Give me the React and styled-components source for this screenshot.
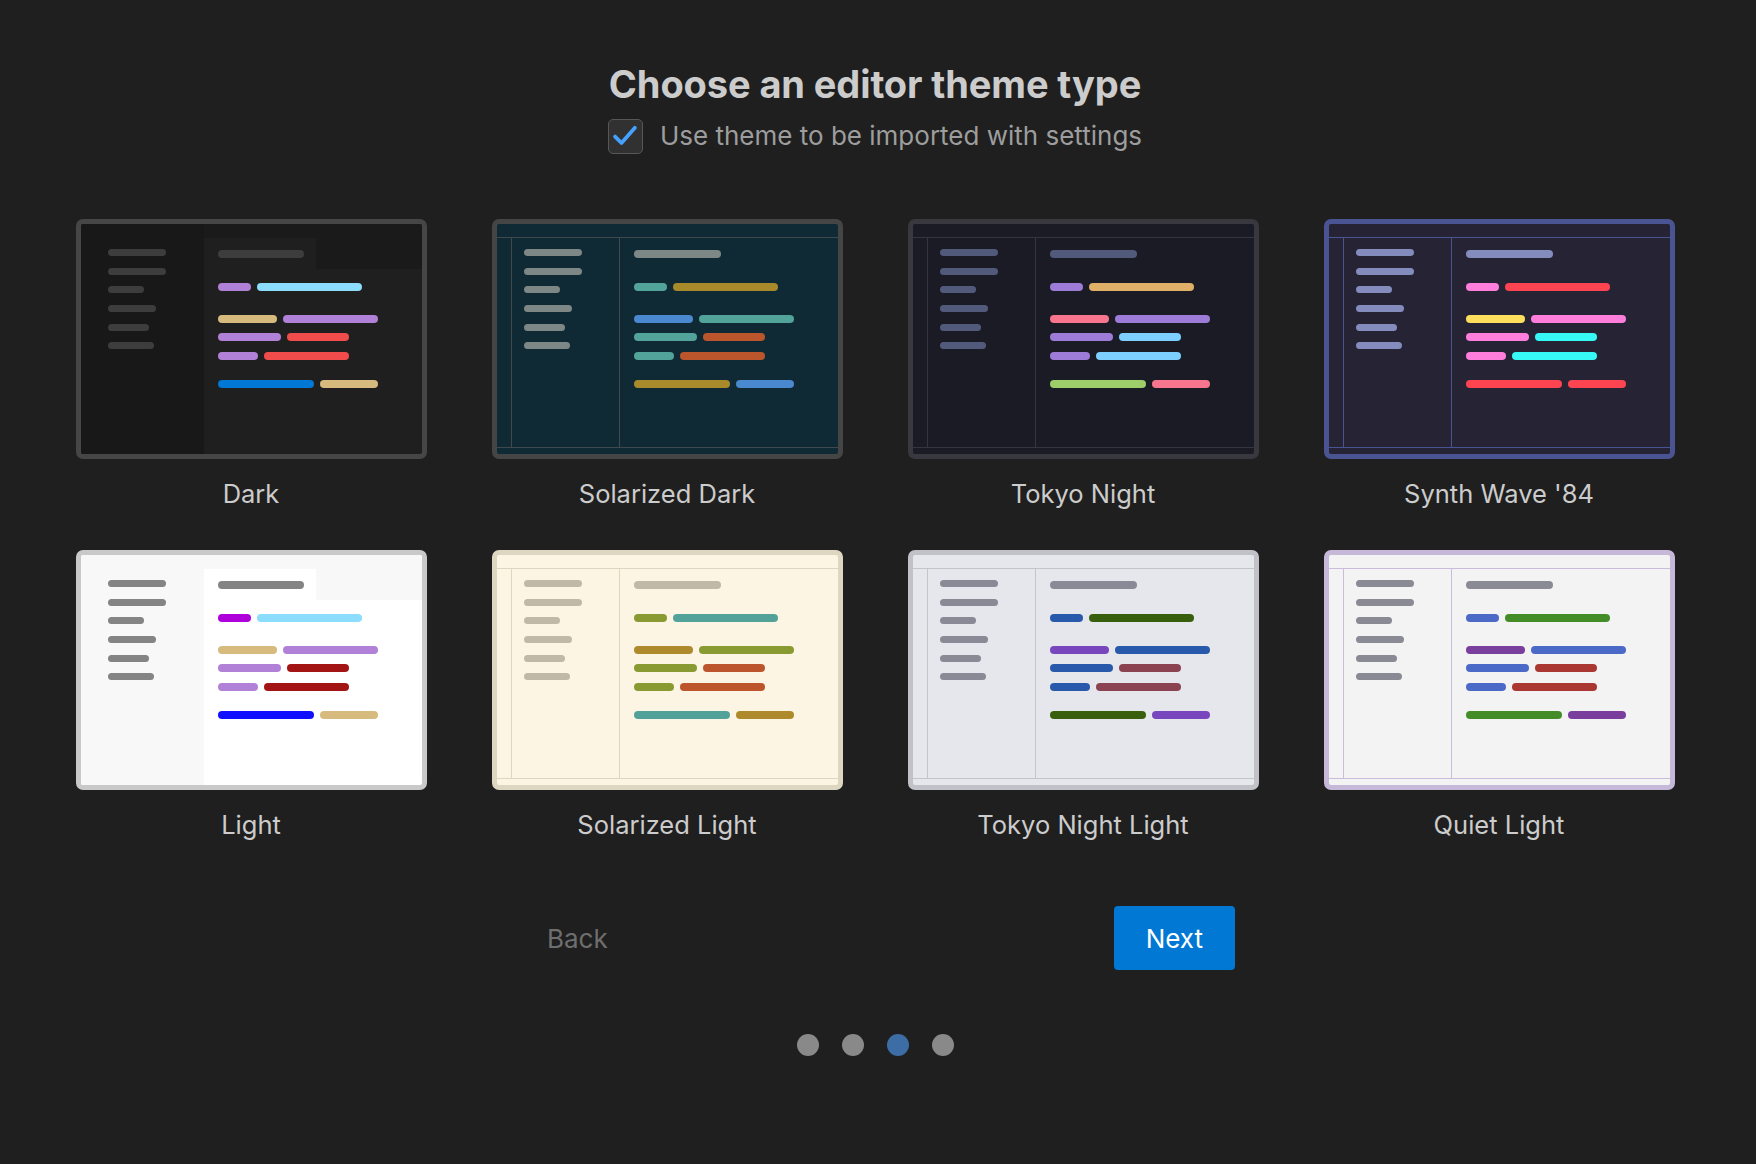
import React from 'react';
import styled, { createGlobalStyle } from 'styled-components';

const GlobalStyle = createGlobalStyle`
  html, body { margin: 0; padding: 0; background: #1f1f1f; }
  * { box-sizing: border-box; }
`;

// widths of the fake code / sidebar lines, same in every preview
const sideWidths = [58, 58, 36, 48, 41, 46];
const codeRows = [
  { gap: 0, w: [33, 105] },
  { gap: 24, w: [59, 95] },
  { gap: 10, w: [63, 62] },
  { gap: 11, w: [40, 85] },
  { gap: 20, w: [96, 58] },
];

const themes = [
  {
    name: 'Dark', tabs: true, border: '#464646', bg: '#1f1f1f', side: '#181818', bar: '#1a1a1a', muted: '#3d3d3d',
    code: [['#b180d7', '#8cdcfe'], ['#d7ba7d', '#b180d7'], ['#b180d7', '#f14c4c'], ['#b180d7', '#f14c4c'], ['#0078d4', '#d7ba7d']],
  },
  {
    name: 'Solarized Dark', border: '#454545', line: '#404a4e', bg: '#0f2a34', muted: '#7d8786',
    code: [['#52a39a', '#a98a2b'], ['#4a88cf', '#52a39a'], ['#52a39a', '#bb552c'], ['#52a39a', '#bb552c'], ['#a98a2b', '#4a88cf']],
  },
  {
    name: 'Tokyo Night', border: '#38383e', line: '#34353f', bg: '#1b1b26', muted: '#525a7c',
    code: [['#9d7cd8', '#e0af68'], ['#f7768e', '#9d7cd8'], ['#9d7cd8', '#7dcfff'], ['#9d7cd8', '#7dcfff'], ['#9ece6a', '#f7768e']],
  },
  {
    name: "Synth Wave '84", border: '#4b5493', line: '#495495', bg: '#262335', muted: '#848bbd',
    code: [['#ff7edb', '#fe4450'], ['#fede5d', '#ff7edb'], ['#ff7edb', '#36f9f6'], ['#ff7edb', '#36f9f6'], ['#fe4450', '#fe4450']],
  },
  {
    name: 'Light', tabs: true, border: '#c9c9c9', bg: '#ffffff', side: '#f8f8f8', bar: '#f8f8f8', muted: '#848484',
    code: [['#af00db', '#8cdcfe'], ['#d7ba7d', '#b180d7'], ['#b180d7', '#a31515'], ['#b180d7', '#a31515'], ['#1010ff', '#d7ba7d']],
  },
  {
    name: 'Solarized Light', border: '#ddd6c1', line: '#ddd6c1', bg: '#fcf5e3', muted: '#c1b9a8',
    code: [['#8a9a32', '#52a29a'], ['#ae8a2c', '#8a9a32'], ['#8a9a32', '#bc552c'], ['#8a9a32', '#bc552c'], ['#52a29a', '#ae8a2c']],
  },
  {
    name: 'Tokyo Night Light', border: '#c1c2c7', line: '#c4c5cb', bg: '#e6e7ed', muted: '#898a96',
    code: [['#2959aa', '#385f0d'], ['#7847bd', '#2959aa'], ['#2959aa', '#8c4351'], ['#2959aa', '#8c4351'], ['#385f0d', '#7847bd']],
  },
  {
    name: 'Quiet Light', border: '#c5b8d9', line: '#c9bcdc', bg: '#f3f3f3', muted: '#898a94',
    code: [['#4b69c6', '#448c27'], ['#7a3e9d', '#4b69c6'], ['#4b69c6', '#aa3731'], ['#4b69c6', '#aa3731'], ['#448c27', '#7a3e9d']],
  },
];

const Page = styled.div`
  min-height: 100vh;
  background: #1f1f1f;
  font-family: Inter, "Noto Sans", sans-serif;
  display: flex;
  flex-direction: column;
  align-items: center;
  padding: 61px 6px 0 0;
`;

const Title = styled.h1`
  margin: 0;
  font-size: 38px;
  line-height: 46px;
  font-weight: 700;
  letter-spacing: -0.1px;
  color: #cccccc;
`;

const ImportRow = styled.label`
  margin-top: 11px;
  display: flex;
  align-items: center;
  gap: 17px;
  color: #9d9d9d;
  font-size: 26px;
  line-height: 36px;
`;

const CheckBox = styled.span`
  width: 35px;
  height: 35px;
  border-radius: 5px;
  background: #313131;
  border: 1.5px solid #575757;
  display: flex;
  align-items: center;
  justify-content: center;
`;

const Grid = styled.div`
  margin-top: 65px;
  display: grid;
  grid-template-columns: repeat(4, 351px);
  column-gap: 65px;
  row-gap: 42px;
`;

const Tile = styled.div`
  display: flex;
  flex-direction: column;
  align-items: center;
`;

const Label = styled.div`
  margin-top: 21px;
  font-size: 25.5px;
  line-height: 28px;
  color: #cccccc;
`;

const Card = styled.div`
  width: 351px;
  height: 240px;
  border: 5px solid ${p => p.$border};
  border-radius: 7px;
  overflow: hidden;
  background: ${p => p.$bg};
  display: flex;
  flex-direction: ${p => (p.$row ? 'row' : 'column')};
`;

const TitleBar = styled.div`
  height: 14px;
  flex: none;
  border-bottom: 1px solid ${p => p.$line};
`;

const StatusBar = styled.div`
  height: 7px;
  flex: none;
  border-top: 1px solid ${p => p.$line};
`;

const Body = styled.div`
  flex: 1;
  display: flex;
  min-height: 0;
`;

const ActivityBar = styled.div`
  width: 15px;
  border-right: 1px solid ${p => p.$line};
`;

const SideBar = styled.div`
  width: ${p => (p.$tabs ? 123 : 108)}px;
  flex: none;
  padding: ${p => (p.$tabs ? '25px 0 0 27px' : '11px 0 0 12px')};
  background: ${p => p.$bg || 'transparent'};
  border-right: ${p => (p.$line ? `1px solid ${p.$line}` : 'none')};
  display: flex;
  flex-direction: column;
  gap: 11.7px;
`;

const Editor = styled.div`
  flex: 1;
  display: flex;
  flex-direction: column;
  padding: ${p => (p.$tabs ? '0' : '12px 0 0 14px')};
`;

const TabStrip = styled.div`
  height: 45px;
  flex: none;
  background: ${p => p.$bg};
  display: flex;
  align-items: flex-end;
`;

const Tab = styled.div`
  width: 112px;
  height: 31px;
  background: ${p => p.$bg};
  padding: 12px 0 0 14px;
`;

const Code = styled.div`
  padding: ${p => (p.$tabs ? '14px 0 0 14px' : '25px 0 0 0')};
  display: flex;
  flex-direction: column;
`;

const CodeRow = styled.div`
  display: flex;
  gap: 6px;
  margin-top: ${p => p.$gap}px;
`;

const Pill = styled.div`
  height: ${p => p.$h || 8}px;
  width: ${p => p.$w}px;
  border-radius: 4px;
  background: ${p => p.$c};
  flex: none;
`;

const Footer = styled.div`
  margin-top: 67px;
  width: 720px;
  display: flex;
  justify-content: space-between;
`;

const Button = styled.button`
  height: 64px;
  padding: 0 32px;
  border: none;
  border-radius: 4px;
  font-family: inherit;
  font-size: 26px;
  background: ${p => (p.$primary ? '#0078d4' : 'transparent')};
  color: ${p => (p.$primary ? '#ffffff' : '#6e6e6e')};
  cursor: pointer;
`;

const Dots = styled.div`
  margin-top: 64px;
  display: flex;
  gap: 23px;
`;

const Dot = styled.span`
  width: 22px;
  height: 22px;
  border-radius: 50%;
  background: ${p => (p.$active ? '#3c6ea5' : '#898989')};
`;

function SideLines({ color }) {
  return sideWidths.map((w, i) => <Pill key={i} $w={w} $h={7} $c={color} />);
}

function CodeLines({ theme }) {
  return (
    <Code $tabs={theme.tabs}>
      {codeRows.map((row, i) => (
        <CodeRow key={i} $gap={row.gap}>
          <Pill $w={row.w[0]} $c={theme.code[i][0]} />
          <Pill $w={row.w[1]} $c={theme.code[i][1]} />
        </CodeRow>
      ))}
    </Code>
  );
}

function Preview({ theme }) {
  if (theme.tabs) {
    return (
      <Card $border={theme.border} $bg={theme.bg} $row>
        <SideBar $tabs $bg={theme.side}>
          <SideLines color={theme.muted} />
        </SideBar>
        <Editor $tabs>
          <TabStrip $bg={theme.bar}>
            <Tab $bg={theme.bg}>
              <Pill $w={86} $c={theme.muted} />
            </Tab>
          </TabStrip>
          <CodeLines theme={theme} />
        </Editor>
      </Card>
    );
  }
  return (
    <Card $border={theme.border} $bg={theme.bg}>
      <TitleBar $line={theme.line} />
      <Body>
        <ActivityBar $line={theme.line} />
        <SideBar $line={theme.line}>
          <SideLines color={theme.muted} />
        </SideBar>
        <Editor>
          <Pill $w={87} $c={theme.muted} />
          <CodeLines theme={theme} />
        </Editor>
      </Body>
      <StatusBar $line={theme.line} />
    </Card>
  );
}

export default function App() {
  return (
    <Page>
      <GlobalStyle />
      <Title>Choose an editor theme type</Title>
      <ImportRow>
        <CheckBox>
          <svg width="28" height="28" viewBox="0 0 24 24" fill="none">
            <path d="M3.5 12.5l5.5 5.5L20.5 5" stroke="#45a1ff" strokeWidth="3.2" strokeLinecap="round" strokeLinejoin="round" />
          </svg>
        </CheckBox>
        Use theme to be imported with settings
      </ImportRow>
      <Grid>
        {themes.map(t => (
          <Tile key={t.name}>
            <Preview theme={t} />
            <Label>{t.name}</Label>
          </Tile>
        ))}
      </Grid>
      <Footer>
        <Button>Back</Button>
        <Button $primary>Next</Button>
      </Footer>
      <Dots>
        {[0, 1, 2, 3].map(i => (
          <Dot key={i} $active={i === 2} />
        ))}
      </Dots>
    </Page>
  );
}
